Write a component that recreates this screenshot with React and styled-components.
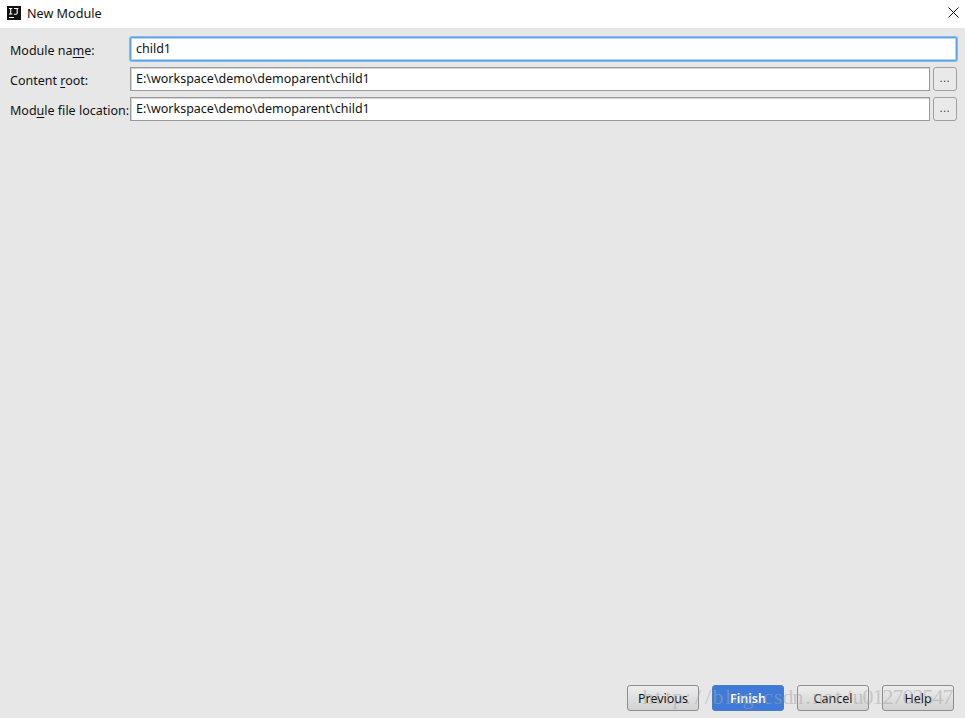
import React from "react";
import styled, { createGlobalStyle } from "styled-components";

const GlobalStyle = createGlobalStyle`
  html, body {
    margin: 0;
    padding: 0;
    height: 100%;
    background: #e7e7e7;
    font-family: "Noto Sans", "Open Sans", sans-serif;
    font-size: 13px;
    color: #111;
  }
`;

const Dialog = styled.div`
  position: relative;
  display: flex;
  flex-direction: column;
  width: 965px;
  height: 718px;
  overflow: hidden;
`;

const TitleBar = styled.div`
  display: flex;
  align-items: center;
  height: 28px;
  padding: 0 6px 0 7px;
  background: #fff;
`;

const Title = styled.span`
  margin-left: 6px;
  flex: 1;
  font-size: 12.6px;
  line-height: 26px;
`;

const CloseIcon = () => (
  <svg width="11" height="11" viewBox="0 0 11 11" style={{ marginBottom: 4 }}>
    <path d="M0.5 0.5 L10.5 10.5 M10.5 0.5 L0.5 10.5" stroke="#111" strokeWidth="1" fill="none" />
  </svg>
);

const Logo = () => (
  <svg width="14" height="14" viewBox="0 0 14 14" style={{ marginBottom: 2 }}>
    <rect width="14" height="14" fill="#111" />
    <path d="M2 2.5h3.4M3.7 2.5v5.5M2 8h3.4M7 2.5h4.4M10.2 2.5v4.6q0 1.2-1.2 1.2H7M2 11.5h5" stroke="#fff" strokeWidth="1.1" fill="none" />
  </svg>
);

const Form = styled.div`
  display: flex;
  flex-direction: column;
  gap: 6px;
  padding: 9px 8px 0 10px;
  flex: 1;
`;

const Row = styled.div`
  display: flex;
  align-items: center;
  height: 24px;
`;

const Label = styled.label`
  width: 120px;
  flex: none;
  font-size: 12.5px;
  white-space: nowrap;
  padding-top: 3px;
  u {
    text-underline-offset: 2px;
  }
`;

const Field = styled.div`
  flex: 1;
  height: 24px;
  box-sizing: border-box;
  padding: 0 5px;
  font-size: 12.5px;
  line-height: 21px;
  background: #fff;
  border: 1px solid ${(p) => (p.$focused ? "#5ea3e6" : "#9a9a9a")};
  border-radius: ${(p) => (p.$focused ? "2px" : "0")};
  box-shadow: ${(p) =>
    p.$focused ? "0 0 0 1px #86b9ec, inset 0 0 0 1px #b5d5f4" : "inset 1px 1px 0 #d4d4d4"};
`;

const BrowseButton = styled.div`
  display: flex;
  align-items: center;
  justify-content: center;
  width: 24px;
  height: 24px;
  margin-left: 3px;
  padding-bottom: 3px;
  box-sizing: border-box;
  border: 1px solid #a0a0a0;
  border-radius: 3px;
  background: #e9e9e9;
  font-size: 10px;
  letter-spacing: 0.8px;
  color: #333;
`;

const Footer = styled.div`
  display: flex;
  justify-content: flex-end;
  gap: 13px;
  padding: 0 11px 7px 0;
`;

const Button = styled.div`
  display: flex;
  align-items: center;
  justify-content: center;
  width: 72px;
  height: 26px;
  box-sizing: border-box;
  font-size: 12.5px;
  border-radius: 3px;
  border: 1px solid ${(p) => (p.$primary ? "#4a7cc7" : "#8e8e8e")};
  background: ${(p) => (p.$primary ? "#3f7ad8" : "linear-gradient(#ededed, #d2d2d2)")};
  color: ${(p) => (p.$primary ? "#fff" : "#111")};
  font-weight: ${(p) => (p.$primary ? 600 : 400)};
`;

const Watermark = styled.div`
  position: absolute;
  left: 643px;
  top: 682px;
  display: flex;
  font-family: "Liberation Serif", serif;
  font-size: 22px;
  line-height: 30px;
  color: rgba(165, 165, 165, 0.5);
  pointer-events: none;
`;

// the watermark has a fixed step per character, like a half-width CJK serif
const WatermarkChar = styled.span`
  width: 10px;
  display: flex;
  justify-content: center;
`;

const watermark = "http://blog.csdn.net/u012702547";

export default function App() {
  return (
    <>
      <GlobalStyle />
      <Dialog>
        <TitleBar>
          <Logo />
          <Title>New Module</Title>
          <CloseIcon />
        </TitleBar>
        <Form>
          <Row>
            <Label>Module na<u>m</u>e:</Label>
            <Field $focused>child1</Field>
          </Row>
          <Row>
            <Label>Content <u>r</u>oot:</Label>
            <Field>E:\workspace\demo\demoparent\child1</Field>
            <BrowseButton>...</BrowseButton>
          </Row>
          <Row>
            <Label>Mod<u>u</u>le file location:</Label>
            <Field>E:\workspace\demo\demoparent\child1</Field>
            <BrowseButton>...</BrowseButton>
          </Row>
        </Form>
        <Footer>
          <Button>Previous</Button>
          <Button $primary>Finish</Button>
          <Button>Cancel</Button>
          <Button>Help</Button>
        </Footer>
        <Watermark>
          {watermark.split("").map((c, i) => (
            <WatermarkChar key={i}>{c}</WatermarkChar>
          ))}
        </Watermark>
      </Dialog>
    </>
  );
}
